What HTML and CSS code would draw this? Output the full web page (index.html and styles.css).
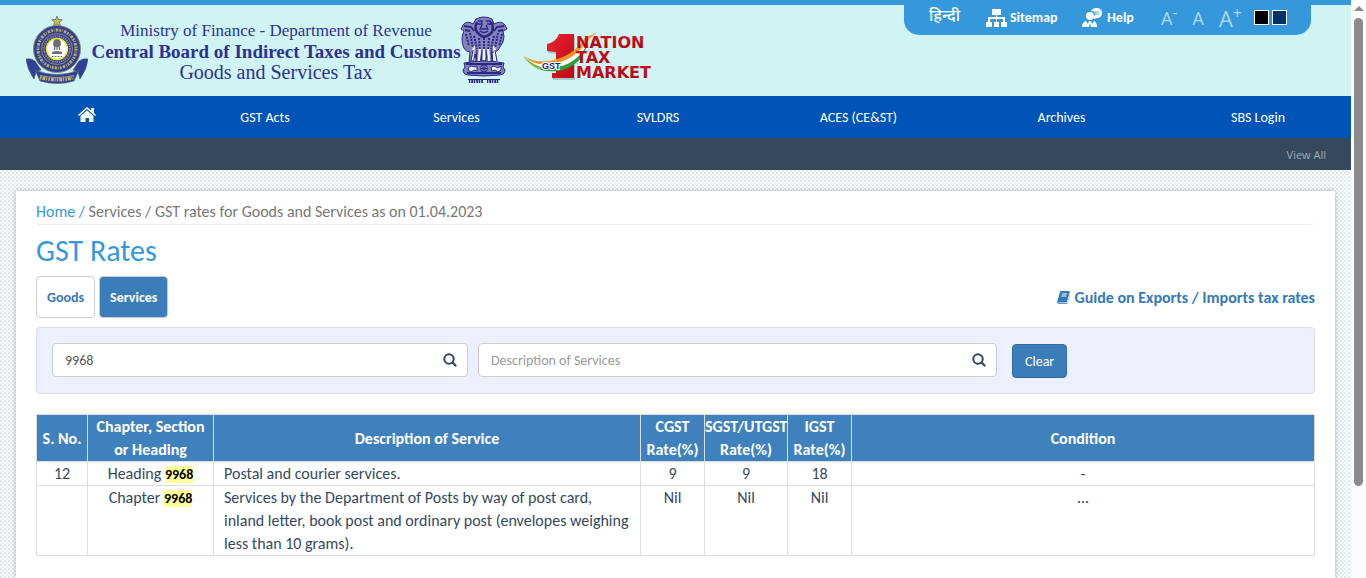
FILE: index.html
```html
<!DOCTYPE html>
<html lang="en">
<head>
<meta charset="utf-8">
<meta name="viewport" content="width=device-width, initial-scale=1">
<title>GST Rates</title>
<link rel="stylesheet" href="styles.css">
</head>
<body>
<div class="page">
  <header class="masthead">
    <div class="brand">
      <svg class="crest" viewBox="0 0 62 68" role="img" aria-label="CBIC crest">
        <path d="M31 0l1.500 3.500 3.800.3-2.800 2.500 1 3.700-3.500-2-3.500 2 1-3.700L25.700 3.800l3.800-.3z" fill="#c9b84f" stroke="#5e6066" stroke-width=".7"/>
        <path d="M0 43q5-1 9 2l6 9-5 2-2 7Q1 53 0 43zM62 43q-5-1-9 2l-6 9 5 2 2 7q7-10 8-20z" fill="#303f97" stroke="#4e5976" stroke-width=".7"/>
        <circle cx="31" cy="33" r="23.500" fill="#303f97" stroke="#8c8a64"/>
        <circle cx="31" cy="33" r="19" fill="none" stroke="#b9ab62" stroke-width="3" stroke-dasharray="1.700 1 .8 1.200 2.500 1.100"/>
        <circle cx="31" cy="33" r="15.500" fill="#34408f" stroke="#b9ab62" stroke-width=".7"/>
        <circle cx="31" cy="33" r="12.900" fill="none" stroke="#8d8c70" stroke-width="2" stroke-dasharray="1 1 1.500 .8"/>
        <circle cx="31" cy="33" r="10.500" fill="#fff" stroke="#eee334" stroke-width="1.300"/>
        <path d="M27.500 25q1-2 3.500-2t3.500 2l.5 4-1.500 2h-5l-1.500-2zM28 31h1.300v3H28zM30.400 31h1.300v3h-1.300zM32.800 31h1.300v3h-1.300zM26 36q5-2 10 0v2H26z" fill="#6a6f74"/>
        <path d="M26 40.500h10" stroke="#777" stroke-width="1" stroke-dasharray="1 .5"/>
        <path d="M9 54q22 9 44 0l-5 11q-17 5-34 0z" fill="#303f97" stroke="#5c6372" stroke-width=".7"/>
        <path d="M14 61.500q17 4.500 34 0" fill="none" stroke="#c3b46a" stroke-width="3.400" stroke-dasharray="1.500 1 3 .8 1 1.200"/>
        <path d="M14 59.500q17 4 34 0" fill="none" stroke="#c3b46a" stroke-width=".8"/>
      </svg>
      <div class="titles">
        <span class="ministry">Ministry of Finance - Department of Revenue</span>
        <strong class="board">Central Board of Indirect Taxes and Customs</strong>
        <span class="gst">Goods and Services Tax</span>
      </div>
      <svg class="lions" viewBox="0 0 48 68" role="img" aria-label="State emblem of India">
        <g fill="#8481bd" stroke="#2c2882" stroke-width="1">
          <path d="M16 3q8-4 16 0l2 5q7-4 11 1l2 4-4 2q2 5 0 11l-5 8q-3 3-6 2l1 12h-4l-2-10-2 10h-3l-1-9-1 9h-3l-2-10-2 10H9l1-12q-4 0-6-4-4-9 0-17l-3-2 2-4q4-5 10-1z"/>
          <path d="M4 47q20-4 40 0l-1 4 2 3q0 4-5 5-17 2-32 0-5-1-5-5l2-3z"/>
        </g>
        <path d="M14 30l-2 14M20 31l-1 14M28 31l1 14M34 30l2 14M24 32v12" stroke="#edf4fa" stroke-width="2.400" fill="none"/>
        <g fill="none" stroke="#2c2882">
          <path d="M17 6q-3 6 0 10 3 4 7 5 5-1 8-5 2-5-1-10" stroke-width="2.500"/>
          <path d="M18 5h4v3h-5M26 5h4l1 3h-4M22 9l-2 4h8l-2-4M20 15q4 3 8 0" stroke-width="1.300"/>
          <path d="M4 10l7 1 3 4M44 10l-7 1-3 4M5 14l5 1M43 14l-5 1" stroke-width="1.800"/>
          <path d="M6 18l3 12M10 17l3 15M14 20l3 13M19 22l1 12M24 22v12M29 22l-1 12M34 20l-3 13M38 17l-3 15M42 18l-3 12" stroke-width="2" stroke-dasharray="2 1"/>
          <path d="M13 34l-2 11M17 34l-1 11M22 34l-1 11M26 34l1 11M31 34l1 11M35 34l2 11" stroke-width="1.100"/>
          <path d="M6 48h36M7 57h34" stroke-width="2"/>
        </g>
        <g fill="#aeb0d8" stroke="#2c2882" stroke-width="1">
          <circle cx="24" cy="52.500" r="3.500"/><path d="M24 49v7M20.500 52.500h7M21.500 50l5 5M26.500 50l-5 5"/>
          <path fill="#eef5fb" d="M8 52l3-2 4 1 2-1v5l-3-1-3 2-2-1zM31 51l3-1 4 2 3-2v4l-3 2-3-2-3 1z"/>
        </g>
        <path d="M8 63.500h32" stroke="#2c2882" stroke-width="1"/>
        <path d="M9 65.500h14M27 65.500h12" stroke="#2c2882" stroke-width="3" stroke-dasharray="1.300 1 2 .7"/>
      </svg>
      <svg class="nation" viewBox="0 0 136 56" role="img" aria-label="Nation Tax Market">
        <defs>
          <linearGradient id="red" x1="0" y1="0" x2="0" y2="1"><stop offset="0" stop-color="#d4101c"/><stop offset="1" stop-color="#a3060f"/></linearGradient>
          <linearGradient id="one" x1="0" y1="0" x2="1" y2="1"><stop offset="0" stop-color="#f02030"/><stop offset="1" stop-color="#b80d18"/></linearGradient>
        </defs>
        <path d="M34 4h15v44H27v-5h4V22l-9-1v-7q9-2 12-10z" transform="translate(1 2)" fill="#8fa8a8" opacity=".6"/>
        <path d="M34 4h15v44H27v-5h4V22l-9-1v-7q9-2 12-10z" fill="url(#one)"/>
        <path d="M-2 25q9 8 26 6Q48 27 60 8l12-6-8 7Q50 37 29 38 10 38-2 25z" fill="#f4952b"/>
        <path d="M-1 27q10 9 29 7 22-4 34-23l1 3Q50 37 31 39 10 39-1 27z" fill="#fff"/>
        <path d="M6 34q10 6 26 3 19-3 30-22-5 21-29 26-17 2-27-7z" fill="#2ba13b"/>
        <path d="M-2 26q9 9 24 13h-8Q4 35-2 26z" fill="#7fb53b"/>
        <text x="17" y="39" class="logo-gst">GST</text>
        <g class="logo-words"><text x="51" y="18">NATION</text><text x="51" y="33">TAX</text><text x="51" y="48">MARKET</text></g>
      </svg>
    </div>
    <div class="tools">
      <a class="hindi" href="#" lang="hi">हिन्दी</a>
      <a class="tool sitemap" href="#">
        <svg width="21" height="18" viewBox="0 0 21 18" fill="#fff"><path d="M6 0h9v6h-4v2h8v5h2v5h-6v-5h2v-3h-6v3h2v5H8v-5h2v-3H4v3h2v5H0v-5h2V8h8V6H6z"/></svg>
        Sitemap</a>
      <a class="tool help" href="#">
        <svg width="20" height="19" viewBox="0 0 20 19" fill="#fff"><path d="M14 0c4 0 6 2 6 5s-2 5-5 5l-3 1V9c3-5-1-6-3-6 1-2 3-3 5-3z"/><circle cx="8" cy="8" r="4"/><path d="M0 19q0-5 4-6l2 3 1-3h2l1 3 2-3q3 1 3 6H9l-1-4-1 4z"/><path d="M12 4h5M13 6h4" stroke="#3598db" stroke-width=".8"/></svg>
        Help</a>
      <div class="sizes">
        <button class="size small" type="button">A<sup>-</sup></button>
        <button class="size" type="button">A</button>
        <button class="size large" type="button">A<sup>+</sup></button>
      </div>
      <div class="themes">
        <button class="swatch black" type="button" aria-label="Black theme"></button>
        <button class="swatch navy" type="button" aria-label="Blue theme"></button>
      </div>
    </div>
  </header>
  <nav class="menu">
    <a href="#" aria-label="Home"><svg class="home" width="18" height="15" viewBox="0 0 18 15" fill="#fff"><path d="M9 0l4 3.500V1h3v5l2 2-1 1-8-7-8 7-1-1z"/><path d="M9 3.400l6.500 5.600v6H11v-4H7.500v4h-5V9z"/></svg></a>
    <a href="#">GST Acts</a><a href="#">Services</a><a href="#">SVLDRS</a><a href="#">ACES (CE&amp;ST)</a><a href="#">Archives</a><a href="#">SBS Login</a>
  </nav>
  <div class="ticker"><a href="#">View All</a></div>
  <main class="card">
    <div class="crumbs"><a href="#">Home /</a> Services / GST rates for Goods and Services as on 01.04.2023</div>
    <h1>GST Rates</h1>
    <div class="bar">
      <div class="tabs"><button class="tab" type="button">Goods</button><button class="tab active" type="button">Services</button></div>
      <a class="guide" href="#"><svg width="13" height="13" viewBox="0 0 13 13"><path d="M4 0h8q1 .2.700 1.200L10 10.500q-.3 1-1.300 1H2q-1 0-.7.800h7.900q1 0 1.300-1L13 3v1l-2.300 7.800Q10.400 13 9 13H2Q0 13 .2 11L2.800 1.400Q3.200 0 4 0z" fill="#337ab7"/><path d="M5 3h5M4.400 5h5" stroke="#fff"/></svg>Guide on Exports / Imports tax rates</a>
    </div>
    <form class="filters">
      <label class="field code"><input type="text" value="9968" aria-label="Chapter or heading"><svg width="14" height="14" viewBox="0 0 14 14" fill="none" stroke="#34495e"><circle cx="6" cy="6" r="4.700" stroke-width="2"/><path d="M9.500 9.500l3 3" stroke-width="2.300" stroke-linecap="round"/></svg></label>
      <label class="field desc"><input type="text" placeholder="Description of Services" aria-label="Description of Services"><svg width="14" height="14" viewBox="0 0 14 14" fill="none" stroke="#34495e"><circle cx="6" cy="6" r="4.700" stroke-width="2"/><path d="M9.500 9.500l3 3" stroke-width="2.300" stroke-linecap="round"/></svg></label>
      <button class="clear" type="button">Clear</button>
    </form>
    <table class="rates">
      <colgroup><col class="c-no"><col class="c-head"><col class="c-desc"><col class="c-rate"><col class="c-sgst"><col class="c-rate"><col></colgroup>
      <thead><tr><th>S. No.</th><th>Chapter, Section<br>or Heading</th><th>Description of Service</th><th>CGST<br>Rate(%)</th><th>SGST/UTGST<br>Rate(%)</th><th>IGST<br>Rate(%)</th><th>Condition</th></tr></thead>
      <tbody>
        <tr><td>12</td><td>Heading <mark>9968</mark></td><td class="text">Postal and courier services.</td><td>9</td><td>9</td><td>18</td><td>-</td></tr>
        <tr><td></td><td>Chapter <mark>9968</mark></td><td class="text">Services by the Department of Posts by way of post card, inland letter, book post and ordinary post (envelopes weighing less than 10 grams).</td><td>Nil</td><td>Nil</td><td>Nil</td><td>...</td></tr>
      </tbody>
    </table>
  </main>
</div>
<div class="scroll" aria-hidden="true"><i class="up"></i><i class="thumb"></i></div>
</body>
</html>
```
FILE: styles.css
```css
* { box-sizing: border-box; }
body { margin: 0; display: flex; height: 100vh; overflow: hidden; font: 16px/23px Carlito, Lato, sans-serif; color: #34495e; }
a { text-decoration: none; color: inherit; }
button { font: inherit; cursor: pointer; }
.page {
  flex: 1; min-width: 0; display: flex; flex-direction: column;
  background-color: #fcfdfe;
  background-image: radial-gradient(circle at 1px 1px, #dde8ee 1px, transparent 1px), radial-gradient(circle at 3px 3px, #e6eef3 1px, transparent 1px);
  background-size: 4px 4px;
}
.masthead { display: flex; justify-content: space-between; align-items: flex-start; height: 96px; border-top: 5px solid #3598db; background: #d0f4f4; }
.brand { display: flex; align-items: flex-start; padding: 11px 0 0 26px; }
.crest { width: 62px; height: 68px; }
.titles { display: flex; flex-direction: column; align-items: center; width: 372px; padding: 4px 0 0 4px; color: #2e3192; font-family: "Palatino Linotype", Palatino, "Liberation Serif", serif; font-size: 17px; line-height: 21px; white-space: nowrap; }
.board { font-size: 19px; }
.gst { font-size: 20px; }
.lions { width: 48px; height: 68px; }
.nation { width: 136px; height: 56px; margin: 14px 0 0 17px; overflow: visible; }
.logo-gst { font: bold 9px "Liberation Sans", sans-serif; fill: #17246f; stroke: #fff; stroke-width: 2px; paint-order: stroke; }
.logo-words { font: bold 16px "DejaVu Sans", sans-serif; fill: url(#red); }
.tools { display: flex; align-items: center; width: 407px; height: 35px; margin: -5px 40px 0 0; padding-left: 25px; background: #3598db; border-radius: 0 0 15px 15px; color: #fff; font-size: 14px; font-weight: bold; }
.hindi { width: 57px; font-family: "Noto Sans Devanagari", "Noto Sans", sans-serif; font-size: 16px; font-weight: 500; }
.tool { display: flex; align-items: center; gap: 3px; }
.sitemap { width: 96px; }
.help { width: 79px; gap: 5px; }
.sizes { display: flex; align-items: center; gap: 15px; }
.size { padding: 0; border: 0; background: none; color: #add9f6; font-family: "Open Sans", sans-serif; font-size: 18px; font-weight: normal; line-height: 24px; white-space: nowrap; }
.size sup { font-size: 16px; line-height: 1px; }
.large { font-size: 22px; }
.themes { display: flex; gap: 3px; margin-left: 12px; }
.swatch { width: 15px; height: 15px; padding: 0; border: 1px solid #fff; }
.black { background: #000; }
.navy { background: #036; }
.menu { display: grid; grid-template-columns: 174fr 182fr 201fr 202fr 199fr 207fr 186fr; align-items: center; height: 42px; background: #0054b8; color: #fff; font-size: 14px; text-align: center; }
.home { display: inline-block; }
.ticker { height: 32px; padding: 6px 25px 0; background: #34495e; color: #a5adb5; font: 11px/22px "Open Sans", sans-serif; text-align: right; }
.card { flex: 1; margin: 21px 16px 0; padding: 9px 20px 0; background: #fff; box-shadow: 0 0 5px rgba(0, 0, 0, .3); }
.crumbs { height: 25px; border-bottom: 1px solid #eee; border-radius: 4px; color: #777; }
.crumbs a, h1 { color: #3598db; }
h1 { margin: 9px 0; font-size: 30px; font-weight: normal; line-height: 33px; }
.bar { display: flex; justify-content: space-between; align-items: center; }
.tabs { display: flex; gap: 4px; }
.tab { height: 42px; padding: 0 10px; border: 1px solid #ccc; border-radius: 4px; background: #fff; color: #337ab7; font-size: 14px; font-weight: bold; }
.active { background: #3a7db8; color: #fff; }
.guide { display: flex; align-items: center; gap: 4px; color: #337ab7; font-weight: bold; }
.filters { display: flex; align-items: flex-start; height: 67px; margin: 9px 0 20px; padding: 15px 15px 0; border: 1px solid #ddd; border-radius: 4px; background: #ecf0fd; }
.field { display: flex; align-items: center; height: 34px; padding-right: 10px; border: 1px solid #ccc; border-radius: 4px; background: #fff; }
.code { width: 416px; }
.desc { width: 519px; margin: 0 15px 0 10px; }
.field input { flex: 1; min-width: 0; height: 30px; padding: 0 12px; border: 0; background: none; color: #555; font: 14px Carlito, Lato, sans-serif; }
.field input::placeholder { color: #999; }
.clear { height: 34px; margin-top: 1px; padding: 0 12px; border: 1px solid #2e6da4; border-radius: 4px; background: #3a7db8; color: #fff; font-size: 14px; }
.rates { width: 100%; table-layout: fixed; border-collapse: collapse; text-align: center; }
.c-no { width: 51px; }
.c-head { width: 126px; }
.c-desc { width: 427px; }
.c-rate { width: 64px; }
.c-sgst { width: 83px; }
th, td { padding: 0; border: 1px solid #ddd; vertical-align: top; }
th { background: #3f81bc; color: #fff; vertical-align: middle; white-space: nowrap; }
.text { padding: 0 5px 0 10px; text-align: left; }
mark { background: #ff9; color: #000; font-size: 14px; font-weight: bold; line-height: 16px; }
.scroll { display: flex; flex-direction: column; align-items: center; width: 15px; background: #fcfcfc; }
.up { margin: 6px 0; border: 5px solid transparent; border-top: 0; border-bottom: 5px solid #8b8b8b; }
.thumb { width: 9px; height: 81%; margin-top: 1px; border-radius: 5px; background: #8b8b8b; }
```
